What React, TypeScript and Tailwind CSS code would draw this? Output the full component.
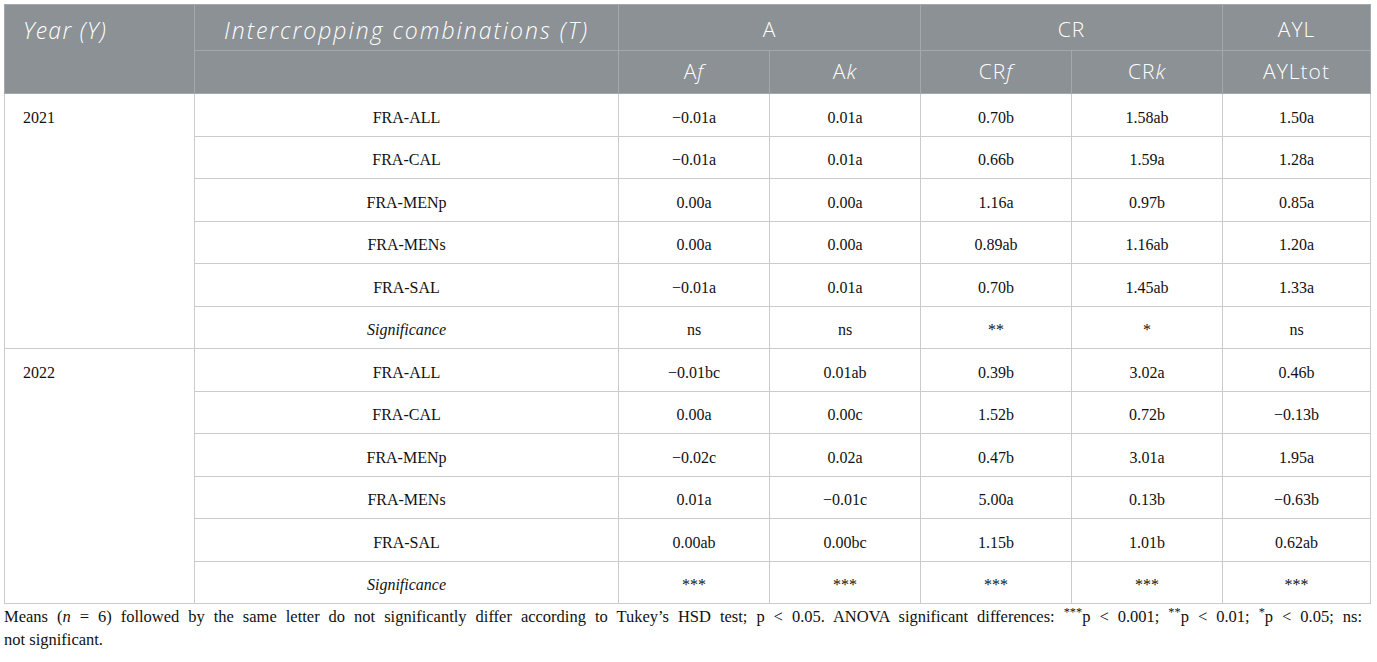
import React from "react";

type Row = { name: string; vals: string[]; sig?: boolean };

const y2021: Row[] = [
  { name: "FRA-ALL", vals: ["−0.01a", "0.01a", "0.70b", "1.58ab", "1.50a"] },
  { name: "FRA-CAL", vals: ["−0.01a", "0.01a", "0.66b", "1.59a", "1.28a"] },
  { name: "FRA-MENp", vals: ["0.00a", "0.00a", "1.16a", "0.97b", "0.85a"] },
  { name: "FRA-MENs", vals: ["0.00a", "0.00a", "0.89ab", "1.16ab", "1.20a"] },
  { name: "FRA-SAL", vals: ["−0.01a", "0.01a", "0.70b", "1.45ab", "1.33a"] },
  { name: "Significance", vals: ["ns", "ns", "**", "*", "ns"], sig: true },
];

const y2022: Row[] = [
  { name: "FRA-ALL", vals: ["−0.01bc", "0.01ab", "0.39b", "3.02a", "0.46b"] },
  { name: "FRA-CAL", vals: ["0.00a", "0.00c", "1.52b", "0.72b", "−0.13b"] },
  { name: "FRA-MENp", vals: ["−0.02c", "0.02a", "0.47b", "3.01a", "1.95a"] },
  { name: "FRA-MENs", vals: ["0.01a", "−0.01c", "5.00a", "0.13b", "−0.63b"] },
  { name: "FRA-SAL", vals: ["0.00ab", "0.00bc", "1.15b", "1.01b", "0.62ab"] },
  { name: "Significance", vals: ["***", "***", "***", "***", "***"], sig: true },
];

const cell = "border border-[#c9cccb] text-center align-middle pt-[6px]";
const head = "border border-[#a4a9ab] text-center align-middle font-light tracking-[1px]";
const headIt = "font-light italic text-[23px]";

function Group({ year, rows }: { year: string; rows: Row[] }) {
  return (
    <>
      {rows.map((r, i) => (
        <tr key={r.name + i} className="h-[42.5px]">
          {i === 0 && (
            <td rowSpan={rows.length} className="border border-[#c9cccb] align-top pl-[18px] pt-[12px]">
              {year}
            </td>
          )}
          <td className={cell + (r.sig ? " italic" : "")}>{r.name}</td>
          {r.vals.map((v, j) => (
            <td key={j} className={cell}>
              {v}
            </td>
          ))}
        </tr>
      ))}
    </>
  );
}

export default function App() {
  return (
    <div className="min-h-screen bg-white pl-[4px] pt-[4px] pr-[7px]">
      <table className="w-[1366px] table-fixed border-collapse border-t border-t-[#c3c8c6] border-b border-b-[#b6bbb7] font-['Liberation_Serif',serif] text-[16px] text-[#111]">
        <colgroup>
          <col className="w-[190px]" />
          <col className="w-[424px]" />
          <col className="w-[151px]" />
          <col className="w-[151px]" />
          <col className="w-[151px]" />
          <col className="w-[151px]" />
          <col className="w-[148px]" />
        </colgroup>
        <thead className="bg-[#8b9194] text-white font-['Open_Sans',sans-serif] text-[21px]">
          <tr className="h-[46px]">
            <th className="border border-[#a4a9ab] border-b-0 text-left align-middle pl-[18px] pt-[5px]">
              <span className={headIt + " tracking-[1.3px]"}>Year (Y)</span>
            </th>
            <th className={head + " pt-[5px]"}>
              <span className={headIt + " tracking-[2px]"}>Intercropping combinations (T)</span>
            </th>
            <th colSpan={2} className={head + " pt-[5px]"}>A</th>
            <th colSpan={2} className={head + " pt-[5px]"}>CR</th>
            <th className={head + " pt-[5px]"}>AYL</th>
          </tr>
          <tr className="h-[43px]">
            <th className="border border-[#a4a9ab] border-t-0"></th>
            <th className={head}></th>
            <th className={head}>
              A<i>f</i>
            </th>
            <th className={head}>
              A<i>k</i>
            </th>
            <th className={head}>
              CR<i>f</i>
            </th>
            <th className={head}>
              CR<i>k</i>
            </th>
            <th className={head}>AYLtot</th>
          </tr>
        </thead>
        <tbody>
          <Group year="2021" rows={y2021} />
          <Group year="2022" rows={y2022} />
        </tbody>
      </table>
      <div className="mt-[1px] w-[1366px] font-['Liberation_Serif',serif] text-[16.5px] leading-[23px] text-[#111]">
        <p className="w-[1358px] text-justify [text-align-last:justify] whitespace-nowrap">
          Means (<i>n</i>&nbsp;=&nbsp;6) followed by the same letter do not significantly differ according to Tukey’s HSD test; p&nbsp;&lt;&nbsp;0.05. ANOVA significant differences: <sup>***</sup>p&nbsp;&lt;&nbsp;0.001; <sup>**</sup>p&nbsp;&lt;&nbsp;0.01; <sup>*</sup>p&nbsp;&lt;&nbsp;0.05; ns:
        </p>
        <p>not significant.</p>
      </div>
    </div>
  );
}
